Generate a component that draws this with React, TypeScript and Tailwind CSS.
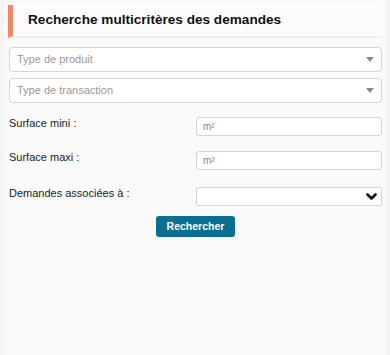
function Caret() {
  return (
    <svg width="8" height="5" viewBox="0 0 8 5" aria-hidden="true">
      <path d="M0 0h8L4 5z" fill="#8a8a8a" />
    </svg>
  );
}

function Chevron() {
  return (
    <svg width="11" height="8" viewBox="0 0 11 8" aria-hidden="true">
      <path d="M1.5 1.5l4 4 4-4" fill="none" stroke="#111" strokeWidth="2.6" strokeLinecap="round" strokeLinejoin="round" />
    </svg>
  );
}

function FakeSelect({ label }: { label: string }) {
  return (
    <div className="flex h-[25px] items-center justify-between rounded-[4px] border border-[#d4d4d4] bg-white pl-[7px] pr-[7px]">
      <span className="text-[11px] text-[#9a9a9a]">{label}</span>
      <Caret />
    </div>
  );
}

function Row({ label, mt, children }: { label: string; mt: string; children: React.ReactNode }) {
  return (
    <div className={`flex items-start ${mt}`}>
      <div className="w-[187px] text-[11px] leading-[12px] text-[#222]">{label}</div>
      <div className="w-[186px]">{children}</div>
    </div>
  );
}

export default function App() {
  return (
    <div className="h-[355px] w-full overflow-hidden bg-[#f4f4f4] font-['Liberation_Sans',Arial,sans-serif]">
      <div className="ml-[4px] h-full w-[382px] bg-[#fafafa] pt-[5px]">
        <div className="ml-[4px] mr-[3px] flex h-[33px] items-center border-b-2 border-l-[5px] border-b-[#efefef] border-l-[#f0896c] bg-[#fcfcfc] pl-[15px]">
          <h1 className="text-[13.6px] font-bold text-[#111]">Recherche multicritères des demandes</h1>
        </div>

        <div className="ml-[5px] mr-[4px] mt-[9px] flex flex-col gap-[6px]">
          <FakeSelect label="Type de produit" />
          <FakeSelect label="Type de transaction" />
        </div>

        <div className="ml-[5px] mr-[4px]">
          <Row label="Surface mini :" mt="mt-[14px]">
            <div className="flex h-[19px] items-center rounded-[3px] border border-[#d4d4d4] bg-white pl-[6px] text-[10px] text-[#8a8a8a]">m²</div>
          </Row>
          <Row label="Surface maxi :" mt="mt-[15px]">
            <div className="flex h-[19px] items-center rounded-[3px] border border-[#d4d4d4] bg-white pl-[6px] text-[10px] text-[#8a8a8a]">m²</div>
          </Row>
          <Row label="Demandes associées à :" mt="mt-[17px]">
            <div className="flex h-[19px] items-center justify-end rounded-[2px] border border-[#d4d4d4] bg-white pr-[4px]">
              <Chevron />
            </div>
          </Row>
        </div>

        <div className="mt-[10px] flex justify-center pl-[1px]">
          <button className="h-[21px] w-[79px] rounded-[3px] bg-[#0a6f91] text-[10.5px] font-bold text-white">
            Rechercher
          </button>
        </div>
      </div>
    </div>
  );
}
